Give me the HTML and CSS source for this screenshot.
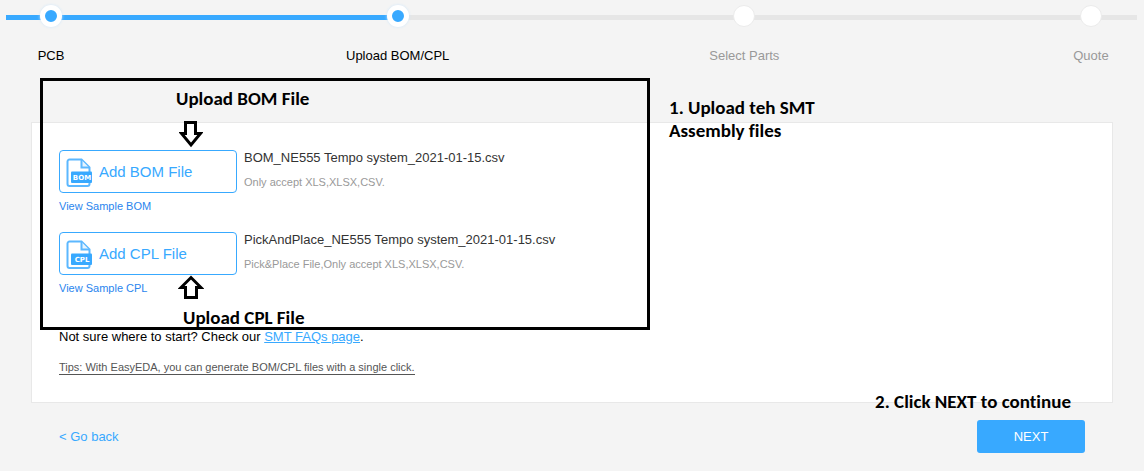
FILE: index.html
```html
<!DOCTYPE html>
<html lang="en">
<head>
<meta charset="utf-8">
<meta name="viewport" content="width=device-width, initial-scale=1">
<title>Upload BOM/CPL</title>
<link rel="stylesheet" href="styles.css">
</head>
<body>
<nav class="stepper" aria-label="Order progress">
  <div class="rail"><div class="rail-done"></div></div>
  <ol class="steps">
    <li class="step done"><span class="dot"></span><span class="step-name">PCB</span></li>
    <li class="step done" aria-current="step"><span class="dot"></span><span class="step-name">Upload BOM/CPL</span></li>
    <li class="step"><span class="dot"></span><span class="step-name">Select Parts</span></li>
    <li class="step"><span class="dot"></span><span class="step-name">Quote</span></li>
  </ol>
</nav>

<main class="card">
  <section class="upload">
    <button class="add" type="button">
      <svg class="file-icon" width="28" height="32" viewBox="0 -2 28 32" aria-hidden="true">
        <path d="M3.500 1.500h12l8 8V26a2 2 0 0 1-2 2h-18a2 2 0 0 1-2-2V3.500a2 2 0 0 1 2-2z" fill="#fff" stroke="#5cb8ff" stroke-width="2"/>
        <path d="M15.500 2v7.500h7.500" fill="#e6f4ff" stroke="#5cb8ff" stroke-width="2"/>
        <rect x="5" y="13.500" width="21" height="11.500" rx="1" fill="#38a9ff"/>
        <text class="icon-text" x="16" y="22" text-anchor="middle">BOM</text>
      </svg>
      <span>Add BOM File</span>
    </button>
    <div class="info">
      <p class="file-name">BOM_NE555 Tempo system_2021-01-15.csv</p>
      <p class="hint">Only accept XLS,XLSX,CSV.</p>
    </div>
    <a class="sample" href="#bom">View Sample BOM</a>
  </section>
  <section class="upload">
    <button class="add" type="button">
      <svg class="file-icon" width="28" height="32" viewBox="0 -2 28 32" aria-hidden="true">
        <path d="M3.500 1.500h12l8 8V26a2 2 0 0 1-2 2h-18a2 2 0 0 1-2-2V3.500a2 2 0 0 1 2-2z" fill="#fff" stroke="#5cb8ff" stroke-width="2"/>
        <path d="M15.500 2v7.500h7.500" fill="#e6f4ff" stroke="#5cb8ff" stroke-width="2"/>
        <rect x="5" y="13.500" width="21" height="11.500" rx="1" fill="#38a9ff"/>
        <text class="icon-text" x="16" y="22" text-anchor="middle">CPL</text>
      </svg>
      <span>Add CPL File</span>
    </button>
    <div class="info">
      <p class="file-name">PickAndPlace_NE555 Tempo system_2021-01-15.csv</p>
      <p class="hint">Pick&amp;Place File,Only accept XLS,XLSX,CSV.</p>
    </div>
    <a class="sample" href="#cpl">View Sample CPL</a>
  </section>
  <p class="faq">Not sure where to start? Check our <a href="#faq">SMT FAQs page</a>.</p>
  <a class="tips" href="#tips">Tips: With EasyEDA, you can generate BOM/CPL files with a single click.</a>
</main>

<footer class="actions">
  <a class="back" href="#back">&lt; Go back</a>
  <button class="next" type="button">NEXT</button>
  <p class="note note-next">2. Click NEXT to continue</p>
</footer>

<div class="frame">
  <p class="note note-bom">Upload BOM File</p>
  <svg class="arrow-down" width="24" height="27" viewBox="0 0 24 27" aria-hidden="true">
    <path d="M6.500 1.500h10v11h5L12 24 2.500 12.500h4z" fill="#fff" stroke="#000" stroke-width="3"/>
  </svg>
  <svg class="arrow-up" width="26" height="26" viewBox="0 0 26 26" aria-hidden="true">
    <path d="M7.500 22.500h11v-10h4.500L13 2.500 3 12.500h4.500z" fill="#fff" stroke="#000" stroke-width="3"/>
  </svg>
  <p class="note note-cpl">Upload CPL File</p>
</div>
<p class="note note-files">1. Upload teh SMT<br>Assembly files</p>
</body>
</html>
```

FILE: styles.css
```css
* {
  box-sizing: border-box;
}

body {
  position: relative;
  margin: 0;
  background: #f4f4f4;
  color: #000;
  font-family: "Liberation Sans", Arial, sans-serif;
  font-size: 13px;
  line-height: 16px;
}

p {
  margin: 0;
}

button {
  font-family: inherit;
  cursor: pointer;
}

/* Progress stepper: the rail and the steps share one grid cell */
.stepper {
  display: grid;
  padding-top: 5px;
}

.rail,
.steps {
  grid-area: 1 / 1;
}

.rail {
  height: 5px;
  margin: 10px 7px 0 6px;
  background: #e6e6e6;
}

.rail-done {
  width: 35%;
  height: 100%;
  background: #38a9ff;
}

.steps {
  display: flex;
  justify-content: space-between;
  margin: 0;
  padding: 0 3px 0 1px;
  list-style: none;
}

.step {
  display: flex;
  flex-direction: column;
  align-items: center;
  gap: 21px;
  width: 100px;
  color: #999;
  white-space: nowrap;
}

.dot {
  width: 22px;
  height: 22px;
  border: 1px solid #ebebeb;
  border-radius: 50%;
  background: #fff;
}

.done {
  color: #000;
}

.done .dot {
  border: 5px solid #fff;
  background: #38a9ff;
  box-shadow: 0 0 3px #cfe7fa;
}

/* Upload card */
.card {
  display: flex;
  flex-direction: column;
  align-items: flex-start;
  margin: 58px 31px 0;
  padding: 27px;
  border: 1px solid #e8e8e8;
  background: #fff;
}

.upload {
  display: grid;
  grid-template-columns: 178px auto;
  gap: 5px 7px;
  margin-bottom: 18px;
}

.add {
  display: flex;
  align-items: center;
  gap: 5px;
  height: 43px;
  padding: 0 6px;
  border: 1px solid #38a9ff;
  border-radius: 4px;
  background: #fff;
  color: #38a9ff;
  font-size: 15px;
}

.icon-text {
  fill: #fff;
  font-family: "DejaVu Sans", sans-serif;
  font-size: 7px;
  font-weight: bold;
}

.file-name {
  color: #333;
}

.hint {
  margin-top: 8px;
  color: #999;
  font-size: 11px;
}

.sample {
  color: #2a85ee;
  font-size: 11px;
  text-decoration: none;
}

.faq {
  margin-top: 15px;
}

.faq a {
  color: #38a9ff;
}

.tips {
  margin-top: 15px;
  border-bottom: 1px solid #555;
  color: #555;
  font-size: 11px;
  line-height: 14px;
  text-decoration: none;
}

/* Footer actions */
.actions {
  position: relative;
  display: flex;
  align-items: center;
  justify-content: space-between;
  padding: 17px 59px 18px;
}

.back {
  color: #38a9ff;
  text-decoration: none;
}

.next {
  width: 108px;
  height: 33px;
  border: 0;
  border-radius: 3px;
  background: #38a9ff;
  color: #fff;
  font-size: 13px;
}

/* Annotations drawn over the page */
.note {
  position: absolute;
  font-family: Carlito, Lato, sans-serif;
  font-size: 19px;
  font-variant-ligatures: none;
  font-weight: bold;
  line-height: 23px;
  white-space: nowrap;
}

.frame {
  position: absolute;
  top: 78px;
  left: 40px;
  width: 610px;
  height: 252px;
  border: 3px solid #000;
  pointer-events: none;
}

.note-bom {
  top: 6px;
  left: 133px;
}

.arrow-down {
  position: absolute;
  top: 40px;
  left: 136px;
}

.arrow-up {
  position: absolute;
  top: 194px;
  left: 135px;
}

.note-cpl {
  top: 225px;
  left: 140px;
}

.note-files {
  top: 96px;
  left: 669px;
}

.note-next {
  top: -13px;
  right: 73px;
}
```
